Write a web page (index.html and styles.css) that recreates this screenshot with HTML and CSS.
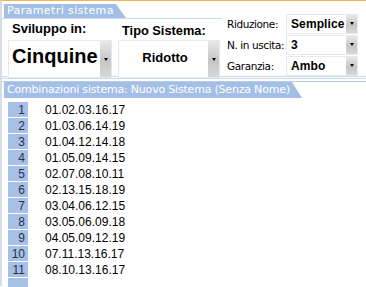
FILE: index.html
```html
<!DOCTYPE html>
<html>
<head>
<meta charset="utf-8">
<link rel="stylesheet" href="styles.css">
</head>
<body>
<div class="frame">
  <div class="top">
    <div class="left">
      <div class="tabrow"><div class="tab tab1">Parametri sistema</div></div>
      <div class="cols">
        <div class="col col1">
          <div class="biglabel">Sviluppo in:</div>
          <div class="combo big"><div class="val">Cinquine</div><div class="arrow"><span></span></div></div>
        </div>
        <div class="col col2">
          <div class="biglabel">Tipo Sistema:</div>
          <div class="combo big mid"><div class="val">Ridotto</div><div class="arrow"><span></span></div></div>
        </div>
      </div>
    </div>
    <div class="right">
      <div class="frow"><div class="flabel">Riduzione:</div><div class="combo small"><div class="val">Semplice</div><div class="arrow"><span></span></div></div></div>
      <div class="frow"><div class="flabel">N. in uscita:</div><div class="combo small"><div class="val">3</div><div class="arrow"><span></span></div></div></div>
      <div class="frow"><div class="flabel">Garanzia:</div><div class="combo small"><div class="val">Ambo</div><div class="arrow"><span></span></div></div></div>
    </div>
  </div>
  <div class="sep"></div>
  <div class="tabrow2"><div class="tab tab2">Combinazioni sistema: Nuovo Sistema (Senza Nome)</div></div>
  <div class="list">
    <div class="row"><div class="idx">1</div><div class="num">01.02.03.16.17</div></div>
    <div class="row"><div class="idx">2</div><div class="num">01.03.06.14.19</div></div>
    <div class="row"><div class="idx">3</div><div class="num">01.04.12.14.18</div></div>
    <div class="row"><div class="idx">4</div><div class="num">01.05.09.14.15</div></div>
    <div class="row"><div class="idx">5</div><div class="num">02.07.08.10.11</div></div>
    <div class="row"><div class="idx">6</div><div class="num">02.13.15.18.19</div></div>
    <div class="row"><div class="idx">7</div><div class="num">03.04.06.12.15</div></div>
    <div class="row"><div class="idx">8</div><div class="num">03.05.06.09.18</div></div>
    <div class="row"><div class="idx">9</div><div class="num">04.05.09.12.19</div></div>
    <div class="row"><div class="idx">10</div><div class="num">07.11.13.16.17</div></div>
    <div class="row"><div class="idx">11</div><div class="num">08.10.13.16.17</div></div>
    <div class="row"><div class="idx"></div><div class="num"></div></div>
  </div>
</div>
</body>
</html>
```
FILE: styles.css
```css
html, body { margin: 0; padding: 0; background: #fff; }
body { width: 366px; height: 287px; overflow: hidden; font-family: "Liberation Sans", Arial, sans-serif; color: #000; }
.frame { border-top: 1px solid #f4b25a; border-left: 2px solid #d6dde8; height: 286px; box-sizing: border-box; }
.top { display: flex; height: 75px; }
.left { width: 220px; }
.tabrow { display: flex; padding: 3px 0 0 2px; border-bottom: 1px solid #cddbf0; height: 14px; }
.tab { position: relative; background: #a3bfe7; color: #fff; font-family: "DejaVu Sans", sans-serif; font-size: 11px; line-height: 14px; height: 14px; padding: 0 2px 0 3px; margin-right: 10px; white-space: nowrap; }
.tab1 { letter-spacing: 0.4px; }
.tab::after { content: ""; position: absolute; right: -10px; top: 0; border-bottom: 14px solid #a3bfe7; border-right: 10px solid transparent; }
.cols { display: flex; }
.col { display: flex; flex-direction: column; }
.col1 { width: 104px; margin-left: 6px; }
.col2 { width: 102px; margin-left: 6px; }
.biglabel { font-weight: bold; font-size: 13px; line-height: 15px; height: 19px; padding-top: 2px; padding-left: 4px; }
.col2 .biglabel { padding-top: 4px; height: 17px; font-size: 12.8px; }
.combo { display: flex; border: 1px solid #e6e9ee; background: #fff; box-sizing: border-box; }
.combo .val { flex: 1; font-weight: bold; }
.arrow { width: 11px; background: linear-gradient(to bottom, #e8e8e8, #c6c6c6 55%, #d8d8d8); display: flex; align-items: center; justify-content: center; }
.arrow span { width: 0; height: 0; border-left: 2.5px solid transparent; border-right: 2.5px solid transparent; border-top: 3px solid #000; }
.big { height: 38px; }
.big .val { font-size: 20px; line-height: 30px; padding-left: 3px; }
.mid .val { text-align: center; font-size: 13px; line-height: 33px; }
.right { padding-top: 12px; margin-left: 5px; }
.frow { display: flex; align-items: center; height: 21px; }
.flabel { width: 59px; font-family: "DejaVu Sans", sans-serif; font-size: 10.5px; letter-spacing: -0.4px; white-space: nowrap; }
.small { width: 72px; height: 20px; }
.small .val { font-size: 12px; line-height: 18px; padding-left: 4px; letter-spacing: 0.1px; }
.sep { height: 1px; border-top: 1px solid #c9d9f1; border-bottom: 1px solid #c9d9f1; }
.tabrow2 { display: flex; margin-top: 2px; padding-left: 2px; border-top: 1px solid #b5cbeb; }
.tab2 { height: 16px; line-height: 16px; font-size: 11px; letter-spacing: -0.2px; padding: 0 2px 0 3px; }
.tab2::after { border-bottom-width: 16px; }
.list { padding: 4px 0 0 6px; }
.row { display: flex; height: 16px; align-items: stretch; }
.idx { width: 17px; background: #a6c0e8; margin-bottom: 1px; text-align: right; padding-right: 3px; font-size: 12px; line-height: 16px; color: #26324a; }
.num { padding-left: 17px; font-size: 12px; line-height: 16px; }
```
